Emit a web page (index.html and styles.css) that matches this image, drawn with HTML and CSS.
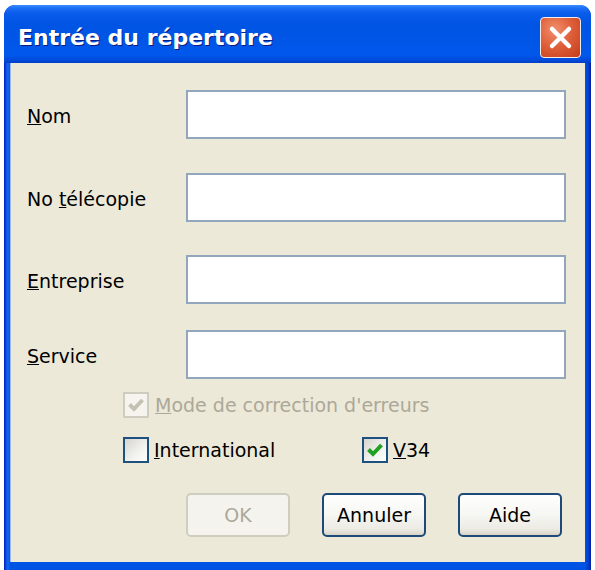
FILE: index.html
```html
<!DOCTYPE html>
<html lang="fr">
<head>
<meta charset="utf-8">
<title>Entrée du répertoire</title>
<link rel="stylesheet" href="styles.css">
</head>
<body>
<div class="window">
  <div class="titlebar">
    <span class="title">Entrée du répertoire</span>
    <span class="close">
      <svg width="41" height="41" viewBox="0 0 41 41"><path d="M12 12 L29 29 M29 12 L12 29" stroke="#fff" stroke-width="4.5" stroke-linecap="round" fill="none"/></svg>
    </span>
  </div>
  <div class="client">
    <div class="row r1"><span class="label"><u>N</u>om</span><span class="input"></span></div>
    <div class="row r2"><span class="label">No <u>t</u>élécopie</span><span class="input"></span></div>
    <div class="row r3"><span class="label"><u>E</u>ntreprise</span><span class="input"></span></div>
    <div class="row r4"><span class="label"><u>S</u>ervice</span><span class="input"></span></div>
    <div class="checkrow c1">
      <span class="check disabled">
        <svg width="22" height="22" viewBox="0 0 22 22"><polyline points="4.5,10.5 9,15 17.5,6" stroke="#c4c1b3" stroke-width="4" fill="none" stroke-linejoin="miter"/></svg>
      </span>
      <span class="ctext dis"><u>M</u>ode de correction d'erreurs</span>
    </div>
    <div class="checkrow c2">
      <span class="item intl">
        <span class="check"></span>
        <span class="ctext"><u>I</u>nternational</span>
      </span>
      <span class="item v34">
        <span class="check">
          <svg width="22" height="22" viewBox="0 0 22 22"><polyline points="4.5,10.5 9,15 17.5,6" stroke="#21a121" stroke-width="4" fill="none" stroke-linejoin="miter"/></svg>
        </span>
        <span class="ctext"><u>V</u>34</span>
      </span>
    </div>
    <div class="buttons">
      <span class="btn disabled">OK</span>
      <span class="btn">Annuler</span>
      <span class="btn">Aide</span>
    </div>
  </div>
</div>
</body>
</html>
```

FILE: styles.css
```css
html, body {
  margin: 0;
  padding: 0;
  background: #ffffff;
}
body {
  font-family: "DejaVu Sans", "Liberation Sans", sans-serif;
  font-size: 19px;
  color: #000;
}
.window {
  margin: 5px 0 0 4px;
  width: 587px;
  height: 565px;
  display: flex;
  flex-direction: column;
  border-radius: 11px 11px 0 0;
  background: linear-gradient(to right, #0019b8 0px, #0a4fe6 2px, #1666f0 4px, #0054e3 6px, #0054e3 calc(100% - 6px), #0038c8 calc(100% - 2px), #001ea0 100%);
  overflow: hidden;
}
.titlebar {
  height: 58px;
  flex: none;
  display: flex;
  justify-content: space-between;
  align-items: flex-start;
  padding: 0 10px 0 14px;
  border-radius: 11px 11px 0 0;
  background: linear-gradient(to bottom, #3d8dff 0px, #1c6ff5 3px, #0a5ceb 8px, #0054e3 20px, #0056e8 40px, #0058ec 50px, #0048d6 56px, #003cc4 58px);
}
.title {
  margin-top: 20px;
  font-family: "DejaVu Sans", sans-serif;
  font-weight: bold;
  font-size: 22px;
  color: #fff;
  text-shadow: 1px 1px 0 #0a1a80;
}
.close {
  margin-top: 12px;
  width: 41px;
  height: 41px;
  box-sizing: border-box;
  border: 1.5px solid #f4ece8;
  border-radius: 4px;
  background: radial-gradient(circle at 35% 30%, #f0906c 0%, #e0603c 45%, #c43c18 100%);
  display: flex;
  align-items: center;
  justify-content: center;
}
.close svg {
  display: block;
  margin: -1.5px;
}
.client {
  flex: 1;
  margin: 0 6px 8px 6px;
  background: #ece9d8;
  padding-top: 27px;
  box-shadow: inset 1px 0 0 #9fb8f2;
}
.row {
  display: flex;
  align-items: center;
  height: 49px;
}
.r2 { margin-top: 34px; }
.r3 { margin-top: 33px; }
.r4 { margin-top: 26px; }
.label {
  width: 159px;
  padding-left: 17px;
  margin-top: 3px;
}
.input {
  width: 380px;
  height: 49px;
  box-sizing: border-box;
  border: 2px solid #92a7bd;
  background: #fff;
}
.checkrow {
  display: flex;
  align-items: center;
  padding-left: 113px;
  height: 26px;
}
.c1 { margin-top: 13px; }
.c2 { margin-top: 19px; }
.item {
  display: flex;
  align-items: center;
}
.intl { width: 239px; }
.check {
  width: 26px;
  height: 26px;
  box-sizing: border-box;
  border: 2px solid #1c5180;
  background: linear-gradient(135deg, #d6d5cf 0%, #f2f2ef 60%, #ffffff 100%);
  display: flex;
  align-items: center;
  justify-content: center;
  flex: none;
}
.check.disabled {
  border-color: #cfcdc0;
  background: #f5f4ee;
}
.ctext {
  margin-left: 5px;
}
.ctext.dis {
  margin-left: 6px;
  color: #aca899;
}
.buttons {
  display: flex;
  gap: 32px;
  padding-left: 176px;
  margin-top: 30px;
}
.btn {
  width: 104px;
  height: 44px;
  box-sizing: border-box;
  border: 2px solid #1e4a7a;
  border-radius: 5px;
  background: linear-gradient(to bottom, #ffffff 0%, #f6f6f2 50%, #ecebe4 85%, #d8d5c8 100%);
  display: flex;
  align-items: center;
  justify-content: center;
}
.btn.disabled {
  border-color: #cfcdc0;
  background: #f4f3ee;
  color: #aca899;
}
```
